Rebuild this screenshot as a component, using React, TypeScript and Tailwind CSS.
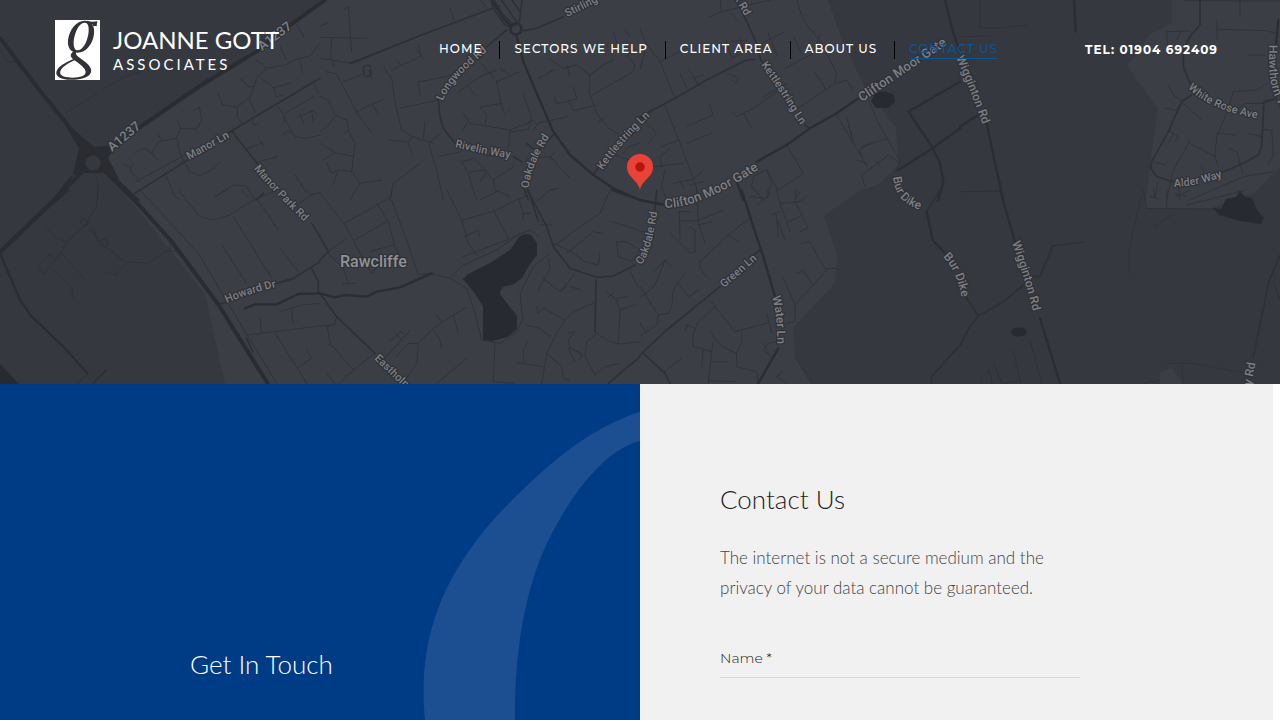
import React from "react";

type Tile = { x: number; y: number; minor: string; mid?: string; major?: string };

const tiles: Tile[] = [
  {
    x: 0,
    y: 0,
    minor:
      "M195 340L290 282M305 270L370 232L420 215M0 150L22 185H48M655 282L668 314L710 322L750 292L770 235L800 205L855 195L890 178L930 168L960 130M722 236L748 262L765 258M748 296L765 337M785 237L822 263L875 248M822 263L828 290L848 286M840 138L858 178M888 72L912 112M900 184L908 218M768 180L800 205M712 322L712 350L725 370M370 492L390 502L402 492M390 502L395 518M405 457L435 445L455 460L475 425L530 415L542 385L590 388L605 360L598 322M582 330L598 322M455 460L470 478M472 402L485 422M532 362L542 385M530 415L540 460L555 490L570 515L600 527L630 512L660 486M390 512L425 548M495 520L525 590L540 600M408 545L545 470L700 395M738 448L790 428M780 425L792 440M765 488L832 470M757 362L762 375L770 372M832 318L855 350L850 370M940 245L955 280M850 350L885 410L920 415L960 405M888 352L940 332L952 345M900 342L912 372M935 335L940 365M848 405L865 390L872 400M645 590L700 555L740 558L765 600M885 525L920 580M285 525L295 545L292 600M855 340L940 290",
    mid: "M405 580L555 485L690 395L800 330L960 235M697 395L775 495",
    major: "M0 115L110 260L200 370L245 440M330 520L415 600M215 530L160 600M320 452L430 375L600 258L770 155L880 70L960 10",
  },
  {
    x: 320,
    y: 0,
    minor:
      "M70 30L85 20L90 90L95 155M0 78L25 70M0 112L140 115M35 115L32 170L42 200M70 245L135 220L128 200L150 195L155 225L135 230M145 210L155 235M20 215L50 222L75 270L115 345L155 398M110 335L190 298M160 315L175 345M190 200L215 235L228 320L245 390L275 410L340 430M240 325L355 300M295 245L330 240L395 225M295 245L300 285M215 210L300 170M232 180L240 195M295 135L303 170M290 150L310 175M275 410L265 430L275 458M205 420L260 425M315 365L310 415M365 398L325 430L350 510L370 600M0 290L25 300L45 345L80 360L85 390L70 405M45 350L20 380L0 395M85 390L105 430L100 470L45 458L10 480M45 458L0 430M100 470L95 515L55 510L38 555M95 515L120 550L185 540M120 550L90 600M20 490L35 520L55 510M485 190L530 245L545 320L555 345M415 275L480 230L530 210M530 245L600 215M445 260L465 285M540 205L570 225M545 310L480 322L500 345L495 378M430 340L450 370L510 380L570 390L640 362M440 370L430 390M570 390L565 445M610 285L635 350L625 388L575 395M570 325L560 340M500 470L525 460M425 485L445 520L460 570L470 600M425 485L465 475L520 540L580 500L582 490M450 515L500 510M520 540L525 570L570 590M500 515L480 545M620 475L690 470L750 535L735 520M690 475L705 455M690 570L715 565M300 490L220 550L210 600M355 470L425 455M390 25L403 58M500 20L470 -10M655 235L705 208M685 175L730 205L770 195L810 225L850 195L880 180M810 225L808 280L830 340L860 380L900 405M815 285L940 215L945 195L920 165L945 150M880 95L895 140M915 90L930 110M740 195L750 230M760 260L770 295L740 305L710 310L702 285M745 300L760 332L830 315M835 365L855 355M640 390L655 370L740 350M885 465L930 480M910 460L925 440L960 430M0 175L100 190L330 95",
    mid: "M90 190L330 95L510 28L540 18M515 10L520 25L555 75L580 85M500 140L560 90M610 92L650 85L730 50M355 300L360 350L370 385L405 430M580 470L605 485M620 430L650 455L700 405M610 560L625 600M820 525L850 480",
    major: "M515 0L550 55L580 85M590 110L610 185L650 280L700 395L750 465L820 525L880 565L960 600",
  },
  {
    x: 640,
    y: 0,
    minor:
      "M205 52L245 35L390 0M245 35L240 0M275 40L288 60M0 85L15 125L60 185L105 295M60 185L140 145M120 220L140 265M145 205L178 258M160 235L190 225M258 120L275 175L305 160M275 125L320 120M300 110L310 150M355 135L435 95M385 100L410 165M435 205L520 160L540 105M460 110L485 160M470 0L490 60L545 130L590 220L585 250L475 325M525 215L558 270M590 250L620 240L640 272M260 220L295 235L290 250L275 240M75 315L120 430L165 550L180 600M65 440L115 420M65 500L60 470L90 445M0 480L45 500L130 490M140 378L220 345L208 310M275 335L290 350L340 325L410 275M312 342L335 383M140 430L215 400M100 550L160 538L190 510M120 540L130 565M150 555L190 545M75 510L65 560L80 600M440 435L490 520L415 570L380 510L340 530L335 560L370 600M380 510L395 550L380 595L330 590M685 300L720 380L780 480L770 515M590 345L640 430L665 470L680 500M640 430L620 350M665 440L745 415M625 375L635 405M665 470L660 450L685 430M650 480L680 490M780 490L745 465L665 525L675 560M710 485L720 500M0 350L50 400L25 430M370 290L440 250M0 210L20 130M465 600L480 575",
    mid: "M290 0L350 130L362 180L380 200M0 350L105 295L200 240L320 180L345 178M30 335L0 355M495 375L510 385",
    major:
      "M350 485L440 435L510 385L590 340L655 295M290 545L310 600M775 510L870 450L960 385M805 335L960 245M805 335L870 430L900 490L910 545L895 600M915 0L940 100L960 155",
  },
  {
    x: 960,
    y: 0,
    minor:
      "M60 0L58 82L110 85L200 75M0 110L90 108M675 2L960 3M620 95L690 93L695 105M620 95L625 170M665 90L650 120M770 65L772 120M775 88L920 92L945 100M625 255L640 285L665 305L725 360M665 310L650 330L615 325M625 390L655 410L645 425M640 400L625 430M690 420L680 440L640 510L620 600M690 430L765 470L775 500M765 470L770 410L800 340L820 275L890 270L920 250M830 330L855 310L910 310L940 300M770 400L830 405M805 445L830 455L848 520M865 400L905 410M910 390L935 390L940 470L925 490M580 485L615 495L620 485M725 500L735 525M595 545L585 590M660 600L655 560L700 545M690 600L850 530L940 515M865 165L915 165M840 0L840 50M0 575L115 573",
    mid: "M720 0L720 75L690 110L670 150L670 200L690 250M695 285L665 305L625 395L575 485L572 505L590 530L640 545M780 520L850 490L895 465L905 440L912 305L950 295",
    major: "M342 0L347 95M0 380L55 345M80 370L105 490L130 600M955 60L948 135",
  },
  {
    x: 0,
    y: 190,
    minor:
      "M295 0L290 50L270 80L262 105L245 115L200 155L182 190L130 252L115 230L148 195L165 205M200 155L170 145L135 110M185 190L215 225L255 268M160 240L215 295L220 325M240 75L255 95M265 115L310 165L375 215L445 220L510 175L508 140M380 220L345 255M310 245L350 255M505 183H535M270 95L295 155M420 0L595 190L690 350L830 580M535 0L600 80L640 90L690 75L760 30L830 0M645 20L680 0M700 80L815 265M665 165L740 280M770 25L835 120M840 175L895 245M725 0L745 20M885 50L940 10M920 0L935 15L960 8M740 435L960 408M780 385L785 425M875 360L880 405M840 365L905 345L960 340M825 430L890 530L920 580M890 535L935 505L920 480M230 580L265 550",
    mid: "M660 342L700 330M830 280L880 265L960 215M935 235L955 275V310M935 100L960 140M280 580L318 540M740 445L758 485M770 30L790 10",
    major: "M205 0L130 65L0 190L60 330L95 380L190 470L262 550M735 355L765 343H830L895 312L960 310",
  },
  {
    x: 320,
    y: 190,
    minor:
      "M0 10L75 105L120 190L155 250L170 230M72 100L155 55L212 20L215 0M170 40L205 95L225 170L240 200M105 150L200 95M150 185L220 165M25 185L80 145M25 190L70 235L85 280M68 282L105 280M215 30L260 150L295 255L330 250M380 0L425 90L445 160L470 195M425 90L520 65L620 15M435 140L475 120L480 140M520 60L565 145M480 30L540 0M595 25L610 70L632 70M610 70L610 90M430 200L560 150L630 120L660 140M390 265L430 225L530 180L600 130M330 250L390 265L440 295L465 370L485 450L540 460L590 425L608 390L600 310L640 230L690 190M650 35L690 0M660 105L695 105M870 0L840 70L780 110L700 170M875 95L955 120M740 190L820 125L850 130M755 185L795 215L835 225L840 190M700 160L755 185M890 155L895 200L935 215L960 180M890 155L920 155L950 175M685 205L690 235L655 300M670 265L720 305L740 290M725 300L765 250M750 290L785 300M0 408L45 405M50 380L45 400L22 410L30 460L100 540L60 580M100 540L165 490M20 550L45 580M230 500L265 460L295 460L340 415L400 375L440 352M350 375L365 395M400 375L415 430M340 420L360 450L365 480M295 460L290 520L260 565M210 455L240 425L250 430M190 510L270 420M225 430L250 455M350 580L440 505M525 460L520 575L580 580M650 350L655 370L670 355L735 390L760 365L820 340M735 390L705 440L680 490L665 580M620 405L660 415L690 440M590 518L670 530M625 450L610 480L612 520M680 490L725 530L730 565L750 570M745 430L765 425L745 450L750 475L785 490L780 510M745 475L765 515M830 430L800 455L795 500L825 555L855 530L900 520M830 430L870 455L900 462L960 455M860 305L890 330L900 360L895 460M865 320L880 310M890 325L920 320M900 360L945 345M930 245L955 290",
    mid: "M0 140L25 185L0 210M0 310L50 380L165 490M828 270L825 425M622 0L680 110L700 170L750 235L830 262L880 258L945 225M865 580L960 500M655 95L625 0",
    major: "M0 310L45 322L75 315L140 320L170 305L240 292L335 250M875 0L960 30",
  },
  {
    x: 640,
    y: 190,
    minor:
      "M118 65L120 145M118 65L150 65M120 92L175 92L250 60M170 0L175 100L195 160M175 105L215 95M90 130L150 190L165 185L165 120L150 110M330 85L270 130L180 215L180 235L200 260M270 138L298 155M350 45L390 15L380 0M410 0L420 40L480 35L495 20M420 40L450 125M465 35L505 115L480 125M445 95L480 80M392 75L420 65M408 70L415 140M415 95L435 152M470 0L465 25M485 160L510 155L535 205L560 240L520 285L465 345L465 390M560 235L590 235M470 250L490 240L518 285M430 265L465 345M0 290L55 375L85 370L95 350L100 300L115 275L135 250M40 245L75 210L95 230M75 210L45 285L20 310L0 320M115 280L145 320L175 300M55 375L50 405L0 440M0 400L20 430M210 330L285 425L380 400M160 430L175 395L225 350M160 430L158 468L215 485L205 580M210 425L245 470L290 490L305 455L305 425M145 400L135 420M140 405L165 415M215 485L220 455M215 515H265M290 490L290 530L350 545L355 580M205 572L290 575M190 480L185 530M72 545L125 505M380 370L395 430M395 500L370 480L385 460L410 455M370 460L380 480M410 560L440 580M425 540L415 560M465 500L515 580M0 125H30M440 400L465 395",
    mid: "M50 0L45 60M0 495L80 420L160 355L240 290M335 200L360 180M10 490L75 550L90 580M900 0L860 65M875 580V560L920 510L960 465",
    major: "M305 0L335 95L370 200L405 320M415 475L355 580M0 30L75 45M860 65L878 150L915 190",
  },
  {
    x: 960,
    y: 190,
    minor:
      "M550 0L560 55L760 58M585 110L635 75M545 15L520 120L508 180V250M680 45L860 0M645 12L680 18M620 0V50M580 0L585 22M570 20L595 25M650 20L690 0M0 5L120 3M210 450L245 580M160 480L182 580M100 520L125 580M60 580L65 560L88 540L95 580M130 580L180 572M620 520L700 520L850 548M665 525L670 580M550 580L600 570M955 240L940 275L960 330",
    mid: "M960 195L925 280L905 380L880 500M20 325L55 378L130 335L190 285M215 260H240L278 168L372 156M55 378L30 410L0 465",
    major: "M120 0L165 155M240 385L300 580",
  },
];

type Label = { text: string; d: string; size?: number };

const labels: Label[] = [
  { text: "A1237", d: "M112 152L160 112", size: 13 },
  { text: "A1237", d: "M262 51L310 15", size: 13 },
  { text: "Manor Ln", d: "M189 160L250 126" },
  { text: "Manor Park Rd", d: "M254 169Q282 202 330 246" },
  { text: "Rivelin Way", d: "M455 147Q485 155 530 161" },
  { text: "Longwood Rd", d: "M443 101Q451 78 498 43" },
  { text: "Oakdale Rd", d: "M529 188Q529 166 560 120" },
  { text: "Kettlestring Ln", d: "M603 170Q622 140 670 98" },
  { text: "Kettlestring Ln", d: "M761 65Q782 93 812 145" },
  { text: "Stirling Way", d: "M567 17L640 -19" },
  { text: "Fairfax Rd", d: "M720 -27L755 34" },
  { text: "Clifton Moor Gate", d: "M665 208Q707 208 780 154", size: 13 },
  { text: "Clifton Moor Gate", d: "M862 102L970 29", size: 13 },
  { text: "Wigginton Rd", d: "M956 58Q970 88 988 140", size: 12 },
  { text: "Wigginton Rd", d: "M1012 243Q1026 280 1040 340", size: 12 },
  { text: "Bur Dike", d: "M893 177C896 203 910 207 938 216", size: 12 },
  { text: "Bur Dike", d: "M943 257Q960 273 964 315", size: 12 },
  { text: "White Rose Ave", d: "M1188 88Q1213 114 1275 121" },
  { text: "Alder Way", d: "M1174 187Q1203 186 1235 172" },
  { text: "Hawthorn Terrace", d: "M1269 45C1269 75 1268 95 1290 120", size: 12 },
  { text: "Oakdale Rd", d: "M641 265Q653 251 659 198" },
  { text: "Green Ln", d: "M724 288L775 244" },
  { text: "Water Ln", d: "M772 297Q779 320 777 365", size: 12 },
  { text: "Howard Dr", d: "M227 303Q250 292 295 283" },
  { text: "Eastholme Dr", d: "M374 359L430 412" },
  { text: "Haxby Rd", d: "M1246 413L1257 355", size: 12 },
];

function MapCanvas() {
  return (
    <svg
      viewBox="0 0 1280 384"
      preserveAspectRatio="xMidYMid slice"
      className="block h-full w-full bg-[#35383f]"
      role="img"
      aria-label="Map of Clifton Moor Gate"
    >
      <path
        fill="#3b3e45"
        d="M93 160L190 92L320 4V0H828L842 40L864 85L896 128L899 165L878 185L860 190L824 216L838 258L834 284L793 328L795 355L812 384H225L205 294L130 200ZM1172 0V23L1150 34L1127 66L1158 108L1152 150L1145 208L1212 208L1255 192L1280 168V0ZM1160 384V372L1172 368L1182 384Z"
      />
      <g fill="none" strokeLinejoin="round" strokeLinecap="round">
        {tiles.map((t) => (
          <g key={`${t.x}-${t.y}`} transform={`translate(${t.x} ${t.y}) scale(0.33333)`}>
            <path d={t.minor} stroke="#2f3137" strokeWidth="2.6" />
            <path d={t.mid} stroke="#2d3035" strokeWidth="5" />
            <path d={t.major} stroke="#2b2d32" strokeWidth="7" />
          </g>
        ))}
        <path
          d="M0 38L37 87L66 123L84 152M102 168L138 204L172 242L218 304L268 384M84 170L52 202L0 252M103 155L143 125L200 86L257 51L293 23L325 0"
          stroke="#2a2c31"
          strokeWidth="4"
        />
        <path d="M66 124L80 148L74 174L82 172H104L120 184L107 158L114 146L94 148Z" fill="#2a2c31" stroke="#2a2c31" strokeWidth="2" />
        <circle cx="93" cy="163" r="9" fill="#35383f" stroke="#2a2c31" strokeWidth="3" />
        <circle cx="516" cy="29" r="5.5" fill="#3b3e45" stroke="#2b2d32" strokeWidth="2.5" />
        <path d="M494 0L503 15L515 26M500 -2L519 25M519 25L522 0M512 0L521 13" stroke="#2d3035" strokeWidth="1.5" />
        <circle cx="104" cy="243" r="4" stroke="#2e3036" />
        <circle cx="84" cy="222" r="3.5" stroke="#2e3036" />
        <ellipse cx="367" cy="71" rx="4" ry="6" stroke="#2e3036" />
      </g>
      <g fill="#272a30">
        <path d="M463 279L468 274L492 262L511 249L519 237Q525 232 531 235L537 243V255L530 264L522 278L514 284L503 287Q497 293 503 298L517 316V329L507 337L492 341L483 340V306L473 291Z" />
        <path d="M875 93Q884 89 894 95L895 102L888 108H876L871 101Z" />
        <path d="M1213 208L1221 209L1226 199L1236 197L1240 191L1245 197L1252 198L1257 210L1264 218L1261 224L1240 221L1219 215Z" />
        <ellipse cx="1019" cy="332" rx="8" ry="4.5" />
        <path d="M0 364L19 384H0Z" />
      </g>
      <g
        fill="#7c7f84"
        stroke="#303238"
        strokeWidth="2.5"
        strokeLinejoin="round"
        className="font-[Roboto,sans-serif] font-medium"
        style={{ paintOrder: "stroke" }}
      >
        {labels.map((l, i) => (
          <g key={i}>
            <path id={`street-${i}`} d={l.d} fill="none" stroke="none" />
            <text fontSize={l.size ?? 11}>
              <textPath href={`#street-${i}`}>{l.text}</textPath>
            </text>
          </g>
        ))}
        <text x="340" y="267" fontSize="16" fill="#909296">
          Rawcliffe
        </text>
      </g>
      <path
        d="M640 191C639 180 627 178 627 167A13 13 0 0 1 653 167C653 178 641 180 640 191Z"
        fill="#ea4335"
      />
      <circle cx="640" cy="167" r="4.700" fill="#b31412" />
    </svg>
  );
}

function LogoMark() {
  return (
    <svg viewBox="0 0 135 180" className="h-[60px] w-[45px] shrink-0 bg-white" aria-hidden="true">
      <g fill="#303238" fillRule="evenodd">
        <path d="M90 2C110 2 120 18 117 42C113 72 94 98 67 98C47 98 37 83 39 61C43 29 63 2 90 2ZM88 8C72 9 58 38 56 66C55 83 61 92 69 91C85 90 99 62 101 34C102 17 98 7 88 8Z" />
        <path d="M96 2C106 6 117 5 127 4L125 18L115 18L113 13L98 12Z" />
        <path d="M66 94C60 99 63 106 72 112L92 127C109 141 112 153 105 163C93 178 62 181 37 179C11 176 0 166 5 153C11 139 31 128 54 118L48 110C45 102 52 96 62 90ZM58 121C38 130 20 142 16 154C12 167 30 173 53 173C76 173 92 167 92 156C92 146 78 134 58 121Z" />
      </g>
    </svg>
  );
}

const links = ["Home", "Sectors we help", "Client area", "About us"];

function Header() {
  return (
    <header className="absolute inset-x-0 top-0 flex items-center pt-5 pr-[62px] pl-[55px]">
      <a href="#" className="flex items-center gap-[13px] font-[Lato,sans-serif] text-white">
        <LogoMark />
        <span className="flex flex-col whitespace-nowrap">
          <span className="text-2xl leading-7">JOANNE GOTT</span>
          <span className="text-[15px] leading-5 tracking-[3px]">ASSOCIATES</span>
        </span>
      </a>
      <nav className="ml-auto font-[Montserrat,Inter,sans-serif] text-xs font-medium tracking-[1px] whitespace-nowrap text-white uppercase">
        <ul className="flex items-center">
          {links.map((l) => (
            <li key={l} className="mr-3.5 border-r border-black pr-[17px] pb-0.5 leading-4">
              <a href="#">{l}</a>
            </li>
          ))}
          <li>
            <a
              href="#"
              aria-current="page"
              className="block border-b border-[#0d5591] pb-px leading-4 text-[#0d5591]"
            >
              Contact us
            </a>
          </li>
        </ul>
      </nav>
      <a
        href="tel:01904692409"
        className="ml-[87px] font-[Montserrat,Inter,sans-serif] text-xs font-bold tracking-[1px] whitespace-nowrap text-white"
      >
        TEL: 01904 692409
      </a>
    </header>
  );
}

export default function App() {
  return (
    <div className="relative flex min-h-screen flex-col bg-white font-[Lato,sans-serif]">
      <section className="h-96">
        <MapCanvas />
      </section>
      <Header />
      <main className="grid grow grid-cols-2">
        <section className="relative overflow-hidden bg-[#003b86] pt-[264px] pl-[190px] text-white">
          <svg
            viewBox="0 0 720 1008"
            className="absolute top-0 right-0 h-[336px] w-[240px]"
            fill="#1c4f92"
            aria-hidden="true"
          >
            <path d="M720 83C580 130 480 210 365 320C250 430 180 525 130 635C85 735 60 855 75 1008H345C344 880 355 730 398 590C430 485 480 395 540 312C600 235 660 185 720 171Z" />
          </svg>
          <h2 className="relative text-[26px] leading-8 font-light">Get In Touch</h2>
        </section>
        <section className="mr-[7px] bg-[#f1f1f1] px-20 pt-[99px]">
          <div className="max-w-[360px]">
            <h1 className="text-[26px] leading-8 font-light text-[#222]">Contact Us</h1>
            <p className="mt-7 text-[17px] leading-[30px] font-light text-[#444]">
              The internet is not a secure medium and the privacy of your data cannot be guaranteed.
            </p>
            <form className="mt-10">
              <label htmlFor="name" className="sr-only">
                Name
              </label>
              <input
                id="name"
                type="text"
                placeholder="Name *"
                className="block h-[35px] w-full border-b border-[#d9d9d9] bg-transparent pb-1 font-[Montserrat,Inter,sans-serif] text-sm font-light text-[#222] outline-none placeholder:text-[#222]"
              />
            </form>
          </div>
        </section>
      </main>
    </div>
  );
}
